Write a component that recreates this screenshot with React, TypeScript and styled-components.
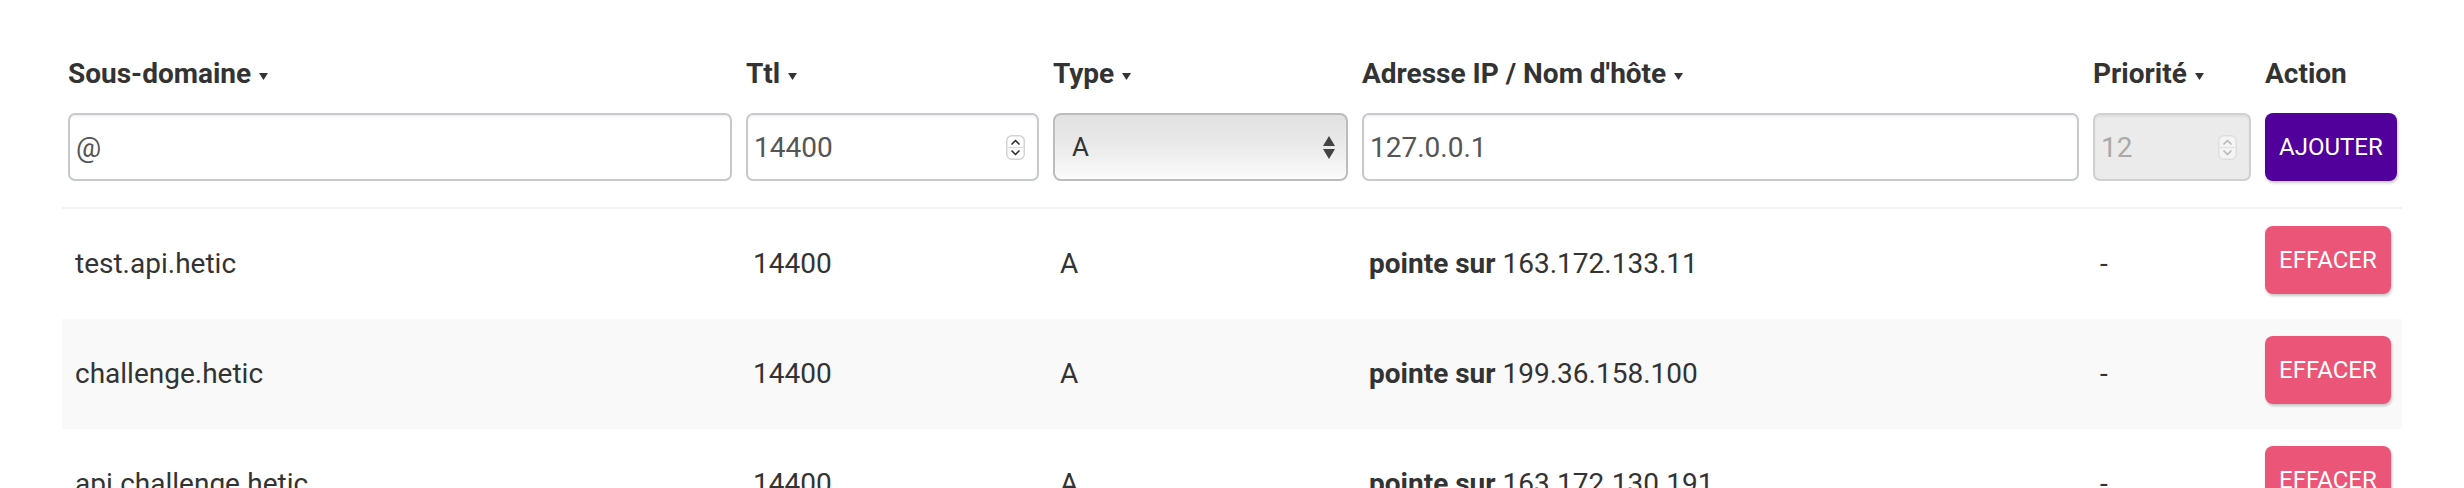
import React from "react";
import styled, { createGlobalStyle } from "styled-components";

const Global = createGlobalStyle`
  html, body { margin: 0; padding: 0; background: #fff; }
  body { font-family: Roboto, "Liberation Sans", Arial, sans-serif; color: #333; }
  * { box-sizing: border-box; }
`;

const COLS = "664px 293px 295px 717px 158px 1fr";

const Page = styled.div`
  padding: 54px 62px 0;
`;

const Table = styled.div`
  width: 2340px;
`;

const Grid = styled.div`
  display: grid;
  grid-template-columns: ${COLS};
  column-gap: 14px;
  padding: 0 6px;
`;

const HeadRow = styled(Grid)`
  font-size: 28px;
  font-weight: 700;
  line-height: 40px;
  color: #333;
`;

const HeadCell = styled.div`
  white-space: nowrap;
`;

const Caret = styled.svg`
  margin-left: 8px;
  vertical-align: 3px;
`;

const InputRow = styled(Grid)`
  margin-top: 19px;
  height: 68px;
`;

const Field = styled.div<{ $disabled?: boolean }>`
  display: flex;
  align-items: center;
  height: 68px;
  border: 2px solid ${(p) => (p.$disabled ? "#d0d0d0" : "#c7cacd")};
  border-radius: 7px;
  background: ${(p) => (p.$disabled ? "#ebebeb" : "#fff")};
  box-shadow: inset 0 2px 2px rgba(0, 0, 0, 0.05);
  padding: 0 12px 0 6px;
`;

const FieldInput = styled.input<{ $disabled?: boolean }>`
  flex: 1;
  min-width: 0;
  border: 0;
  outline: 0;
  padding: 0;
  background: transparent;
  font: 400 28px Roboto, "Liberation Sans", sans-serif;
  color: ${(p) => (p.$disabled ? "#a9a9a9" : "#555")};
`;

const SelectBox = styled.div`
  display: flex;
  align-items: center;
  justify-content: space-between;
  height: 68px;
  border: 2px solid #bcbcbc;
  border-radius: 8px;
  background: linear-gradient(#e1e1e1, #e9e9e9 45%, #fbfbfb);
  box-shadow: inset 0 -2px 2px rgba(255, 255, 255, 0.6);
  padding: 0 11px 0 17px;
  font-size: 26px;
  color: #333;
`;

const Button = styled.button<{ $variant: "add" | "delete" }>`
  justify-self: start;
  height: 68px;
  padding: 0 14px;
  border: 0;
  border-radius: 8px;
  background: ${(p) => (p.$variant === "add" ? "#52009b" : "#eb5578")};
  color: #fff;
  font: 400 24px Roboto, "Liberation Sans", sans-serif;
  text-transform: uppercase;
  box-shadow: 1px 2px 3px rgba(0, 0, 0, 0.22);
  cursor: pointer;
`;

const Body = styled.div`
  margin-top: 26px;
  border-top: 2px solid #f4f4f4;
`;

const Row = styled(Grid)<{ $striped: boolean }>`
  height: 110px;
  align-items: start;
  background: ${(p) => (p.$striped ? "#f9f9f9" : "transparent")};
  font-size: 28px;
  line-height: 40px;
  color: #333;
`;

const Cell = styled.div`
  padding: 35px 0 0 7px;
  white-space: nowrap;
`;

const ActionCell = styled.div`
  padding-top: 17px;
`;

const Strong = styled.b`
  font-weight: 700;
`;

const SortCaret = () => (
  <Caret width="9" height="7" viewBox="0 0 9 7">
    <path d="M0 0 L9 0 L4.5 7 Z" fill="#333" />
  </Caret>
);

const Spinner = ({ disabled }: { disabled?: boolean }) => {
  const c = disabled ? "#b9b9b9" : "#333";
  return (
    <svg width="19" height="25" viewBox="0 0 19 25">
      <rect x="0.75" y="0.75" width="17.5" height="23.5" rx="5" fill={disabled ? "#f4f4f4" : "#fff"} stroke={disabled ? "#dedede" : "#d3d3d3"} strokeWidth="1.5" />
      <line x1="1.5" y1="12.5" x2="17.5" y2="12.5" stroke={disabled ? "#e2e2e2" : "#dcdcdc"} strokeWidth="1.2" />
      <path d="M6 9 L9.5 5.5 L13 9" fill="none" stroke={c} strokeWidth="1.7" strokeLinecap="round" strokeLinejoin="round" />
      <path d="M6 16 L9.5 19.5 L13 16" fill="none" stroke={c} strokeWidth="1.7" strokeLinecap="round" strokeLinejoin="round" />
    </svg>
  );
};

const SelectArrows = () => (
  <svg width="12" height="23" viewBox="0 0 12 23">
    <path d="M0 10 L6 0 L12 10 Z" fill="#444" />
    <path d="M0 13 L12 13 L6 23 Z" fill="#444" />
  </svg>
);

const headers = [
  { label: "Sous-domaine", sort: true },
  { label: "Ttl", sort: true },
  { label: "Type", sort: true },
  { label: "Adresse IP / Nom d'hôte", sort: true },
  { label: "Priorité", sort: true },
  { label: "Action", sort: false },
];

const records = [
  { name: "test.api.hetic", ttl: "14400", type: "A", target: "163.172.133.11", prio: "-" },
  { name: "challenge.hetic", ttl: "14400", type: "A", target: "199.36.158.100", prio: "-" },
  { name: "api.challenge.hetic", ttl: "14400", type: "A", target: "163.172.130.191", prio: "-" },
];

export default function App() {
  return (
    <>
      <Global />
      <Page>
        <Table>
          <HeadRow>
            {headers.map((h) => (
              <HeadCell key={h.label}>
                {h.label}
                {h.sort && <SortCaret />}
              </HeadCell>
            ))}
          </HeadRow>
          <InputRow>
            <Field>
              <FieldInput defaultValue="@" />
            </Field>
            <Field>
              <FieldInput defaultValue="14400" />
              <Spinner />
            </Field>
            <SelectBox>
              <span>A</span>
              <SelectArrows />
            </SelectBox>
            <Field>
              <FieldInput defaultValue="127.0.0.1" />
            </Field>
            <Field $disabled>
              <FieldInput $disabled defaultValue="12" disabled />
              <Spinner disabled />
            </Field>
            <Button $variant="add">Ajouter</Button>
          </InputRow>
          <Body>
            {records.map((r, i) => (
              <Row key={r.name} $striped={i % 2 === 1}>
                <Cell>{r.name}</Cell>
                <Cell>{r.ttl}</Cell>
                <Cell>{r.type}</Cell>
                <Cell>
                  <Strong>pointe sur</Strong> {r.target}
                </Cell>
                <Cell>{r.prio}</Cell>
                <ActionCell>
                  <Button $variant="delete">Effacer</Button>
                </ActionCell>
              </Row>
            ))}
          </Body>
        </Table>
      </Page>
    </>
  );
}
